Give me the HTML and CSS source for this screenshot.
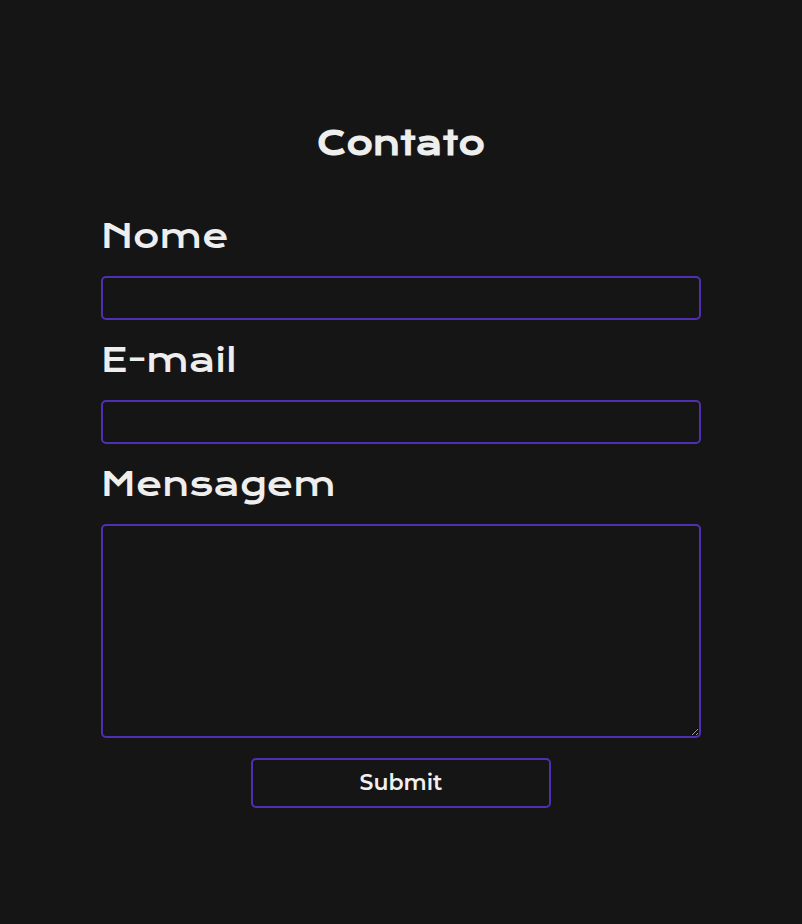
FILE: index.html
```html
<!DOCTYPE html>
<html lang="pt-BR">
<head>
<meta charset="utf-8">
<meta name="viewport" content="width=device-width, initial-scale=1">
<title>Contato</title>
<link rel="stylesheet" href="styles.css">
</head>
<body>
<main class="contact">
  <h2 class="contact-title">Contato</h2>
  <form class="contact-form">
    <label class="label" for="nome">Nome</label>
    <input class="field" type="text" id="nome" name="nome">
    <label class="label" for="email">E-mail</label>
    <input class="field" type="email" id="email" name="email">
    <label class="label" for="mensagem">Mensagem</label>
    <textarea class="field message" id="mensagem" name="mensagem"></textarea>
    <button class="submit" type="submit">Submit</button>
  </form>
</main>
</body>
</html>
```
FILE: styles.css
```css
* {
  box-sizing: border-box;
  margin: 0;
  padding: 0;
}

body {
  min-height: 100vh;
  background: #151515;
  color: #eeeeee;
  font-family: "Krona One", Montserrat, Lato, sans-serif;
}

.contact {
  width: 75%;
  max-width: 600px;
  margin: 0 auto;
  padding: 120px 0;
}

.contact-title {
  margin-bottom: 46px;
  font-size: 32px;
  font-weight: 700;
  line-height: 46px;
  text-align: center;
}

.contact-form {
  display: flex;
  flex-direction: column;
}

.label {
  margin-bottom: 16px;
  font-size: 32px;
  font-weight: 400;
  line-height: 48px;
}

.field {
  width: 100%;
  height: 44px;
  margin-bottom: 16px;
  padding: 8px;
  border: 2px solid #5030b0;
  border-radius: 5px;
  outline: none;
  background: transparent;
  color: inherit;
  font: inherit;
  font-size: 20px;
}

.message {
  height: 214px;
  margin-bottom: 20px;
  resize: vertical;
}

.submit {
  width: 50%;
  height: 50px;
  padding-bottom: 2px;
  align-self: center;
  border: 2px solid #5030b0;
  border-radius: 5px;
  background: transparent;
  color: #f0f0f0;
  font-family: Montserrat, Lato, sans-serif;
  font-size: 22px;
  font-weight: 600;
}
```
